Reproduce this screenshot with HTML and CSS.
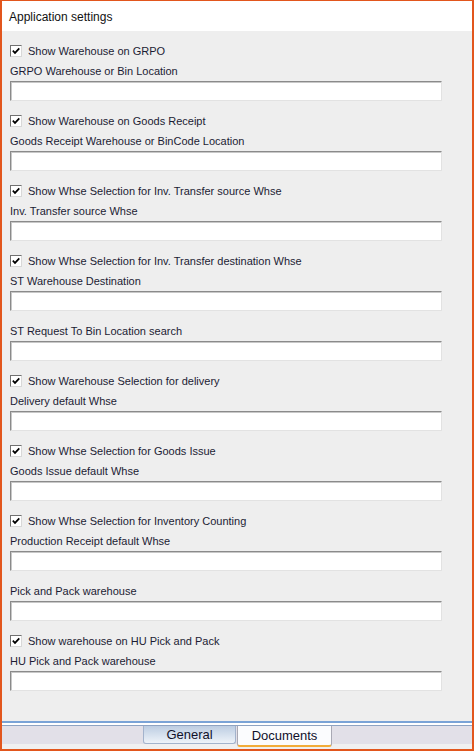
FILE: index.html
```html
<!DOCTYPE html>
<html>
<head>
<meta charset="utf-8">
<link rel="stylesheet" href="styles.css">
</head>
<body>
<div class="window">
  <div class="header">Application settings</div>
  <div class="content">
    <div class="group">
      <div class="check-row"><span class="cb"><svg viewBox="0 0 10 10" width="10" height="10"><path d="M1.8 4.6 L4 6.9 L8.3 2.4" fill="none" stroke="#000" stroke-width="1.7"/></svg></span><span>Show Warehouse on GRPO</span></div>
      <div class="label">GRPO Warehouse or Bin Location</div>
      <div class="input"></div>
    </div>
    <div class="group">
      <div class="check-row"><span class="cb"><svg viewBox="0 0 10 10" width="10" height="10"><path d="M1.8 4.6 L4 6.9 L8.3 2.4" fill="none" stroke="#000" stroke-width="1.7"/></svg></span><span>Show Warehouse on Goods Receipt</span></div>
      <div class="label">Goods Receipt Warehouse or BinCode Location</div>
      <div class="input"></div>
    </div>
    <div class="group">
      <div class="check-row"><span class="cb"><svg viewBox="0 0 10 10" width="10" height="10"><path d="M1.8 4.6 L4 6.9 L8.3 2.4" fill="none" stroke="#000" stroke-width="1.7"/></svg></span><span>Show Whse Selection for Inv. Transfer source Whse</span></div>
      <div class="label">Inv. Transfer source Whse</div>
      <div class="input"></div>
    </div>
    <div class="group">
      <div class="check-row"><span class="cb"><svg viewBox="0 0 10 10" width="10" height="10"><path d="M1.8 4.6 L4 6.9 L8.3 2.4" fill="none" stroke="#000" stroke-width="1.7"/></svg></span><span>Show Whse Selection for Inv. Transfer destination Whse</span></div>
      <div class="label">ST Warehouse Destination</div>
      <div class="input"></div>
    </div>
    <div class="group">
      <div class="label">ST Request To Bin Location search</div>
      <div class="input"></div>
    </div>
    <div class="group">
      <div class="check-row"><span class="cb"><svg viewBox="0 0 10 10" width="10" height="10"><path d="M1.8 4.6 L4 6.9 L8.3 2.4" fill="none" stroke="#000" stroke-width="1.7"/></svg></span><span>Show Warehouse Selection for delivery</span></div>
      <div class="label">Delivery default Whse</div>
      <div class="input"></div>
    </div>
    <div class="group">
      <div class="check-row"><span class="cb"><svg viewBox="0 0 10 10" width="10" height="10"><path d="M1.8 4.6 L4 6.9 L8.3 2.4" fill="none" stroke="#000" stroke-width="1.7"/></svg></span><span>Show Whse Selection for Goods Issue</span></div>
      <div class="label">Goods Issue default Whse</div>
      <div class="input"></div>
    </div>
    <div class="group">
      <div class="check-row"><span class="cb"><svg viewBox="0 0 10 10" width="10" height="10"><path d="M1.8 4.6 L4 6.9 L8.3 2.4" fill="none" stroke="#000" stroke-width="1.7"/></svg></span><span>Show Whse Selection for Inventory Counting</span></div>
      <div class="label">Production Receipt default Whse</div>
      <div class="input"></div>
    </div>
    <div class="group">
      <div class="label">Pick and Pack warehouse</div>
      <div class="input"></div>
    </div>
    <div class="group">
      <div class="check-row"><span class="cb"><svg viewBox="0 0 10 10" width="10" height="10"><path d="M1.8 4.6 L4 6.9 L8.3 2.4" fill="none" stroke="#000" stroke-width="1.7"/></svg></span><span>Show warehouse on HU Pick and Pack</span></div>
      <div class="label">HU Pick and Pack warehouse</div>
      <div class="input"></div>
    </div>
  </div>
  <div class="footer">
    <div class="lines"></div>
    <div class="tabbar">
      <div class="tab general">General</div>
      <div class="tab documents">Documents</div>
    </div>
  </div>
</div>
</body>
</html>
```

FILE: styles.css
```css
html, body {
  margin: 0;
  padding: 0;
}
body {
  width: 474px;
  height: 751px;
  font-family: "Liberation Sans", Arial, sans-serif;
  color: #1c1c34;
}
.window {
  box-sizing: border-box;
  width: 474px;
  height: 751px;
  border: 2px solid #e2561d;
  border-top-width: 1px;
  background: #eeeeee;
  display: flex;
  flex-direction: column;
}
.header {
  box-sizing: border-box;
  height: 30px;
  padding-top: 1px;
  background: #ffffff;
  font-size: 12px;
  line-height: 30px;
  padding-left: 7px;
  color: #111;
}
.content {
  flex: 1;
  padding: 10px 30px 0 8px;
  font-size: 11px;
}
.group {
  margin-bottom: 10px;
}
.check-row {
  height: 20px;
  display: flex;
  align-items: center;
  gap: 6px;
}
.cb {
  box-sizing: border-box;
  width: 12px;
  height: 12px;
  background: #fff;
  border: 1px solid;
  border-color: #707070 #d8d8d8 #d8d8d8 #707070;
  display: flex;
  align-items: center;
  justify-content: center;
}
.cb svg {
  display: block;
}
.label {
  box-sizing: border-box;
  height: 19px;
  padding-top: 1px;
  line-height: 18px;
  margin-bottom: 1px;
}
.input {
  box-sizing: border-box;
  height: 20px;
  background: #fff;
  border: 1px solid;
  border-color: #8a8a8a #e2e2e2 #e2e2e2 #8a8a8a;
  box-shadow: inset 1px 1px 0 #c8c8c8;
}
.footer {
  display: flex;
  flex-direction: column;
}
.lines {
  height: 2px;
  border-top: 2px solid #7aa3d6;
  border-bottom: 1px solid #8ea3c2;
  background: #ffffff;
}
.tabbar {
  height: 23px;
  background: linear-gradient(#e2e0e8 0, #e2e0e8 18px, #f0f0f0 18px);
  display: flex;
  justify-content: center;
  align-items: flex-start;
  gap: 1px;
  padding-left: 1px;
}
.tab {
  box-sizing: border-box;
  font-size: 13px;
  text-align: center;
  color: #10102a;
  border: 1px solid #a3b3cc;
  border-top: none;
  border-radius: 0 0 3px 3px;
}
.general {
  width: 93px;
  height: 18px;
  line-height: 18px;
  background: linear-gradient(#bccde2, #eef3f9);
}
.documents {
  width: 95px;
  height: 21px;
  line-height: 20px;
  background: #fbfcfe;
  border-color: #a9a9b4;
  border-bottom: 2px solid #f2ad3a;
}
```
